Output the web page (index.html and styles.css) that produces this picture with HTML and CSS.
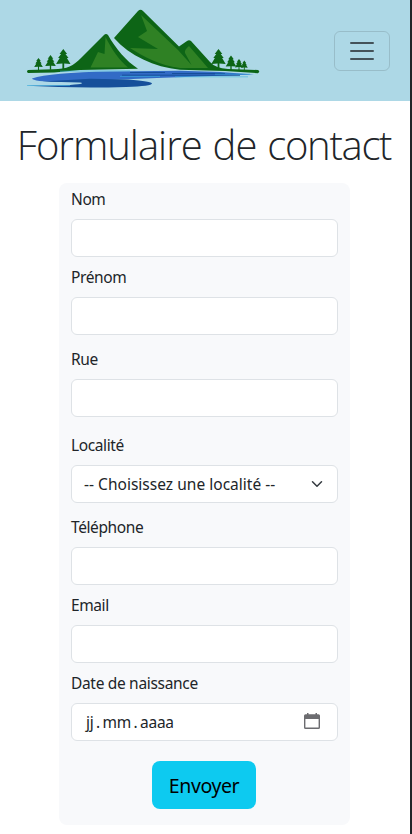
FILE: index.html
```html
<!DOCTYPE html>
<html lang="fr">
<head>
<meta charset="utf-8">
<meta name="viewport" content="width=device-width, initial-scale=1">
<title>Formulaire de contact</title>
<link rel="stylesheet" href="styles.css">
</head>
<body>
<div class="page">
  <header class="navbar">
    <svg class="logo" viewBox="24 6 240 84" aria-hidden="true">
      <defs>
        <path id="tree" d="M0 0 L3.800 5 L2.200 5 L5.200 9 L3.600 9 L7.200 15 L.9 14.500 L.9 20 L-.9 20 L-.9 14.500 L-7.200 15 L-3.600 9 L-5.200 9 L-2.200 5 L-3.800 5Z"/>
      </defs>
      <g fill="#0d6516">
        <path d="M28 70 L53 69.300 C68 69 73 66 81 58 L104 35 Q106 33 108 35 C116 49 126 61 138 68.700 L80 70 L54 72.500 L28 73 Q26 71.500 28 70Z"/>
        <path d="M114 38 L138 11 Q140.500 8.500 143 11 L179 46.500 L187 41 Q189 39.500 191 41 L210 62 Q215 68 228 69 L258 70 Q260.500 71.500 258 73.200 L225 71 L180 69.800 C154 67 130 56 114 38Z"/>
        <use href="#tree" transform="translate(38.500 58) scale(.6)"/>
        <use href="#tree" transform="translate(50.500 55) scale(.74)"/>
        <use href="#tree" transform="translate(63.300 49)"/>
        <use href="#tree" transform="translate(218.500 49)"/>
        <use href="#tree" transform="translate(231 55.500) scale(.74)"/>
        <use href="#tree" transform="translate(239 59) scale(.56)"/>
        <use href="#tree" transform="translate(244.300 60.500) scale(.48)"/>
      </g>
      <g fill="#2f8124">
        <path d="M105.500 37 C112 50 120 61 128 67.500 L90.500 67.500 L98 52 L104.500 54Z"/>
        <path d="M141 15 L178 50 L191.500 65 L185 53 Q184 50 189 46 L208 68 L180 68 C159 65 144 57 130 48 L158 49 L138 37 L147 31Z"/>
      </g>
      <path fill="#326bc6" d="M32 78.500 Q50 72.500 110 71.500 L180 70.800 L220 72 L254 74.500 L157 78 L60 82 Q33 81.500 32 78.500Z"/>
      <path fill="#164f9a" d="M42 81.500 L90 78.800 L128 79.500 Q152 81.500 152 83.500 Q152 86 126 87 Q75 88.500 27 85.700 L65 85.200 Q88 84 80 82.500Z"/>
      <path fill="none" stroke="#164f9a" d="M122 75.200H240M172 73.500H225M130 72.500H165"/>
      <path fill="none" stroke="#3baede" stroke-width=".6" d="M60 71.200 L130 70.800M120 76.400H160M175 76.800H248M215 74.200H250M27 85.500H70"/>
    </svg>
    <button class="toggler" type="button" aria-label="Menu">
      <svg viewBox="0 0 30 30"><path stroke="#212529" stroke-opacity=".75" stroke-linecap="round" stroke-miterlimit="10" stroke-width="2" d="M4 7h22M4 15h22M4 23h22"/></svg>
    </button>
  </header>
  <main>
    <h1><span>Formulaire</span> <span>de</span> <span class="tight">contact</span></h1>
    <form class="card">
      <div class="field"><label for="nom">Nom</label><input id="nom" class="control" type="text"></div>
      <div class="field gap-m"><label for="prenom">Prénom</label><input id="prenom" class="control" type="text"></div>
      <div class="field gap-l"><label for="rue">Rue</label><input id="rue" class="control" type="text"></div>
      <div class="field gap-m"><label>Localité</label>
        <div class="control select"><span class="choice">-- Choisissez une localité --</span>
          <svg class="chevron" viewBox="0 0 16 16"><path fill="none" stroke="#343a40" stroke-linecap="round" stroke-linejoin="round" stroke-width="2" d="m2 5 6 6 6-6"/></svg>
        </div></div>
      <div class="field"><label for="tel">Téléphone</label><input id="tel" class="control" type="tel"></div>
      <div class="field"><label for="email">Email</label><input id="email" class="control" type="email"></div>
      <div class="field"><label class="birth">Date de naissance</label>
        <div class="control date"><span class="parts"><span class="day">jj</span><span class="dot">.</span><span class="month">mm</span><span class="dot">.</span><span class="year">aaaa</span></span>
          <svg class="calendar" viewBox="0 0 16 16"><path fill="#6c6c70" fill-rule="evenodd" d="M3 0h1.500v1.300h7V0H13v1.300h1.500Q16 1.300 16 2.800V14.500Q16 16 14.500 16h-13Q0 16 0 14.500V2.800Q0 1.300 1.500 1.300H3zM1.400 6v8.600h13.200V6z"/></svg>
        </div></div>
      <button class="submit" type="button"><span>Envoyer</span></button>
    </form>
  </main>
</div>
</body>
</html>
```
FILE: styles.css
```css
* { box-sizing: border-box; }
body {
  margin: 0;
  background: #fff;
  color: #212529;
  font: 15.5px/24px "Noto Sans", "Open Sans", sans-serif;
  letter-spacing: -.4px;
}
.page { height: 834px; border-right: 2px solid #212529; overflow: hidden; }
.navbar {
  display: flex;
  align-items: center;
  justify-content: space-between;
  height: 101px;
  padding: 0 20px 0 24px;
  background: #add8e6;
}
.logo { width: 240px; height: 84px; margin-bottom: 5px; }
.toggler {
  display: flex;
  justify-content: center;
  align-items: center;
  width: 56px;
  height: 40px;
  padding: 0;
  border: 1px solid rgba(33, 37, 41, .15);
  border-radius: 6px;
  background: none;
}
.toggler svg { width: 30px; height: 30px; }
h1 {
  margin: 20px 0 14px;
  padding-right: 2px;
  font: 300 40px/48px "Open Sans", sans-serif;
  letter-spacing: -1px;
  word-spacing: 1.5px;
  text-align: center;
  white-space: nowrap;
}
.tight { letter-spacing: -1.3px; }
.card {
  display: flex;
  flex-direction: column;
  width: 291px;
  height: 642px;
  margin-left: 59px;
  padding: 4px 12px 16px;
  border-radius: 8px;
  background: #f8f9fb;
}
.field { margin-bottom: 8px; }
.gap-m { margin-bottom: 12px; }
.gap-l { margin-bottom: 16px; }
label { display: block; margin-bottom: 8px; }
.birth { letter-spacing: -.32px; }
.control {
  display: flex;
  align-items: center;
  justify-content: space-between;
  width: 267px;
  height: 38px;
  padding: 0 12px;
  border: 1px solid #dee2e6;
  border-radius: 6px;
  background: #fff;
}
.choice { letter-spacing: .02px; }
.chevron { width: 16px; height: 12px; }
.date { padding: 0 17px 0 14px; }
.parts { display: flex; letter-spacing: -.25px; }
.dot { width: 9px; text-align: center; }
.calendar { width: 16px; height: 16px; margin-bottom: 3px; }
.submit {
  align-self: center;
  width: 104px;
  height: 48px;
  margin: 12px 0 0 -1px;
  padding: 2px 0 0;
  border: 0;
  border-radius: 8px;
  background: #0dcaf0;
  color: #000;
  font: 19.5px/30px "Noto Sans", sans-serif;
  letter-spacing: -.4px;
}
```
